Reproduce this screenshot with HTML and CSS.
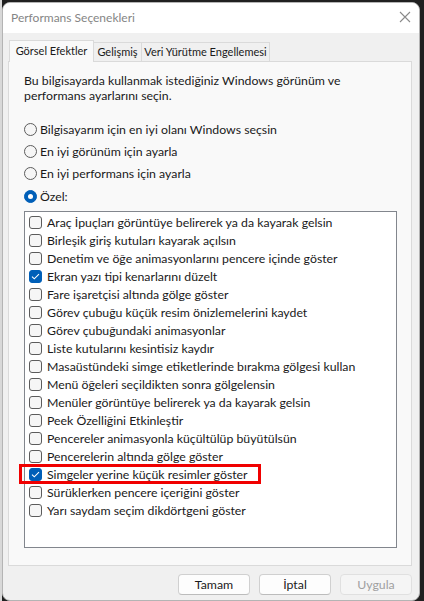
FILE: index.html
```html
<!DOCTYPE html>
<html lang="tr">
<head>
<meta charset="utf-8">
<title>Performans Seçenekleri</title>
<link rel="stylesheet" href="styles.css">
</head>
<body>
<div class="window">
  <div class="titlebar">
    <span class="title">Performans Seçenekleri</span>
    <svg class="close" width="12" height="12" viewBox="0 0 12 12"><path d="M1 1L11 11M11 1L1 11" stroke="#8a8a8a" stroke-width="1.1" fill="none"/></svg>
  </div>
  <div class="tabs">
    <div class="tab active t1">Görsel Efektler</div>
    <div class="tab t2">Gelişmiş</div>
    <div class="tab t3">Veri Yürütme Engellemesi</div>
  </div>
  <div class="panel">
    <p class="desc">Bu bilgisayarda kullanmak istediğiniz Windows görünüm ve performans ayarlarını seçin.</p>
    <div class="radios">
      <div class="radio"><span class="rb"></span>Bilgisayarım için en iyi olanı Windows seçsin</div>
      <div class="radio"><span class="rb"></span>En iyi görünüm için ayarla</div>
      <div class="radio"><span class="rb"></span>En iyi performans için ayarla</div>
      <div class="radio"><span class="rb on"></span>Özel:</div>
    </div>
    <div class="listbox">
      <div class="item"><span class="cb"></span>Araç İpuçları görüntüye belirerek ya da kayarak gelsin</div>
      <div class="item"><span class="cb"></span>Birleşik giriş kutuları kayarak açılsın</div>
      <div class="item"><span class="cb"></span>Denetim ve öğe animasyonlarını pencere içinde göster</div>
      <div class="item"><span class="cb on"><svg width="9" height="7" viewBox="0 0 9 7"><path d="M1 3.6L3.3 5.8L8 1.2" stroke="#fff" stroke-width="1.1" fill="none"/></svg></span>Ekran yazı tipi kenarlarını düzelt</div>
      <div class="item"><span class="cb"></span>Fare işaretçisi altında gölge göster</div>
      <div class="item"><span class="cb"></span>Görev çubuğu küçük resim önizlemelerini kaydet</div>
      <div class="item"><span class="cb"></span>Görev çubuğundaki animasyonlar</div>
      <div class="item"><span class="cb"></span>Liste kutularını kesintisiz kaydır</div>
      <div class="item"><span class="cb"></span>Masaüstündeki simge etiketlerinde bırakma gölgesi kullan</div>
      <div class="item"><span class="cb"></span>Menü öğeleri seçildikten sonra gölgelensin</div>
      <div class="item"><span class="cb"></span>Menüler görüntüye belirerek ya da kayarak gelsin</div>
      <div class="item"><span class="cb"></span>Peek Özelliğini Etkinleştir</div>
      <div class="item"><span class="cb"></span>Pencereler animasyonla küçültülüp büyütülsün</div>
      <div class="item"><span class="cb"></span>Pencerelerin altında gölge göster</div>
      <div class="item marked"><span class="cb on"><svg width="9" height="7" viewBox="0 0 9 7"><path d="M1 3.6L3.3 5.8L8 1.2" stroke="#fff" stroke-width="1.1" fill="none"/></svg></span>Simgeler yerine küçük resimler göster<span class="highlight"></span></div>
      <div class="item"><span class="cb"></span>Sürüklerken pencere içeriğini göster</div>
      <div class="item"><span class="cb"></span>Yarı saydam seçim dikdörtgeni göster</div>
    </div>
  </div>
  <div class="buttons">
    <button class="btn">Tamam</button>
    <button class="btn">İptal</button>
    <button class="btn disabled">Uygula</button>
  </div>
</div>
</body>
</html>
```
FILE: styles.css
```css
html, body {
  margin: 0;
  padding: 0;
}
body {
  background: linear-gradient(to right, #d8d8d8 0, #d8d8d8 2px, transparent 2px), #202020;
  width: 424px;
  height: 601px;
  overflow: hidden;
  font-family: Lato, "Noto Sans", sans-serif;
  font-size: 12.3px;
  color: #1a1a1a;
}
.window {
  margin: 2px 0 0 2px;
  width: 416px;
  height: 597px;
  background: #f0f0f0;
  border: 1px solid #b4b4b4;
  border-radius: 8px;
  display: flex;
  flex-direction: column;
  overflow: hidden;
}
.titlebar {
  height: 30px;
  background: #ffffff;
  display: flex;
  align-items: center;
  justify-content: space-between;
  padding: 0 8px 0 8px;
  flex-shrink: 0;
}
.title {
  color: #858585;
  font-size: 12px;
  margin-top: -1px;
}
.close {
  margin-top: -3px;
}
.tabs {
  display: flex;
  align-items: flex-end;
  margin: 6px 0 0 6px;
  height: 22px;
  position: relative;
  z-index: 1;
  font-size: 11px;
}
.tab {
  height: 19px;
  line-height: 18px;
  text-align: center;
  background: #f0f0f0;
  border: 1px solid #dadada;
  border-bottom: none;
  box-sizing: border-box;
  margin-left: -1px;
}
.tab.active {
  height: 22px;
  line-height: 20px;
  background: #f9f9f9;
  margin-left: 0;
  margin-bottom: -1px;
}
.t1 { width: 85px; }
.t2 { width: 49px; }
.t3 { width: 129px; }
.panel {
  margin: 0 7px 0 5px;
  background: #f9f9f9;
  border: 1px solid #dadada;
  height: 505px;
  box-sizing: border-box;
  padding: 11px 13px 0 15px;
  flex-shrink: 0;
}
.desc {
  margin: 0;
  line-height: 15px;
  width: 330px;
}
.radios {
  margin-top: 15px;
  display: flex;
  flex-direction: column;
}
.radio {
  display: flex;
  align-items: center;
  height: 22.3px;
}
.rb {
  width: 13px;
  height: 13px;
  border: 1px solid #5c5c5c;
  border-radius: 50%;
  box-sizing: border-box;
  background: #f6f6f6;
  margin-right: 3px;
  flex-shrink: 0;
  position: relative;
}
.rb.on {
  background: #005fb8;
  border-color: #005fb8;
}
.rb.on::after {
  content: "";
  position: absolute;
  left: 3px;
  top: 3px;
  width: 5px;
  height: 5px;
  border-radius: 50%;
  background: #fff;
}
.listbox {
  margin-top: 4px;
  width: 373px;
  height: 337px;
  box-sizing: border-box;
  background: #ffffff;
  border: 1px solid #82868d;
  padding: 1px 0 0 4px;
}
.item {
  display: flex;
  align-items: center;
  height: 18px;
  position: relative;
}
.cb {
  width: 13px;
  height: 13px;
  box-sizing: border-box;
  border: 1px solid #5c5c5c;
  border-radius: 3px;
  background: #f6f6f6;
  margin-right: 5px;
  flex-shrink: 0;
  display: flex;
  align-items: center;
  justify-content: center;
}
.cb.on {
  background: #005fb8;
  border-color: #005fb8;
}
.highlight {
  position: absolute;
  left: -10px;
  top: -1px;
  width: 242px;
  height: 20px;
  border: 3px solid #f00000;
  box-sizing: border-box;
  pointer-events: none;
}
.buttons {
  display: flex;
  justify-content: flex-end;
  gap: 9px;
  margin: 8px 7px 0 0;
}
.btn {
  width: 72px;
  height: 21px;
  font-family: Lato, "Noto Sans", sans-serif;
  font-size: 12.3px;
  color: #1a1a1a;
  background: #fdfdfd;
  border: 1px solid #d0d0d0;
  border-bottom-color: #bcbcbc;
  border-radius: 4px;
  padding: 0;
  line-height: 18px;
}
.btn.disabled {
  color: #a0a0a0;
  background: #f5f5f5;
  border-color: #e0e0e0;
}
```
